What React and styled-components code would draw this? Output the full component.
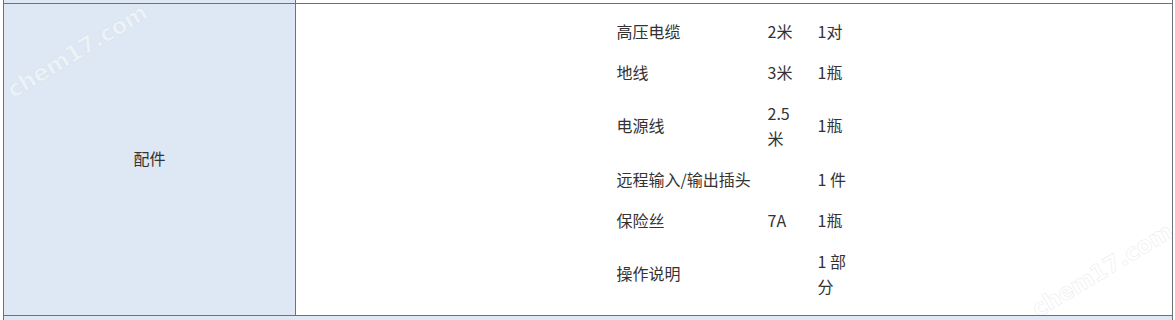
import React from "react";
import styled, { createGlobalStyle } from "styled-components";

const items = [
	{ name: "高压电缆", spec: "2米", qty: "1对" },
	{ name: "地线", spec: "3米", qty: "1瓶" },
	{ name: "电源线", spec: "2.5米", qty: "1瓶" },
	{ name: "远程输入/输出插头", spec: "", qty: "1 件" },
	{ name: "保险丝", spec: "7A", qty: "1瓶" },
	{ name: "操作说明", spec: "", qty: "1 部分" },
];

const GlobalStyle = createGlobalStyle`
	html, body {
		margin: 0;
		padding: 0;
		background: #ffffff;
		overflow: hidden;
	}
	body {
		font-family: "Noto Sans CJK SC", "Noto Sans", sans-serif;
		color: #333333;
	}
`;

const App = () => {
	return (
		<>
			<GlobalStyle />
			<Table>
				<Row $height="3px" $noTop>
					<HeadCell />
					<BodyCell />
				</Row>
				<Row>
					<HeadCell>配件</HeadCell>
					<BodyCell>
						<Parts>
							{items.map((item, i) => (
								<React.Fragment key={i}>
									<PartCell>{item.name}</PartCell>
									<PartCell>{item.spec}</PartCell>
									<PartCell>{item.qty}</PartCell>
								</React.Fragment>
							))}
						</Parts>
					</BodyCell>
					<Watermark $x="73px" $y="47px">chem17.com</Watermark>
					<Watermark $x="1098px" $y="266px">chem17.com</Watermark>
				</Row>
				<FullRow />
			</Table>
		</>
	);
};

const Table = styled.div`
	width: 1170px;
	margin-left: 3px;
	box-sizing: border-box;
	border-left: 1px solid #6e7176;
	border-right: 1px solid #6e7176;
`;

const Row = styled.div`
	position: relative;
	display: grid;
	grid-template-columns: 292px 876px;
	height: ${(p) => p.$height || "auto"};
	border-top: ${(p) => (p.$noTop ? "none" : "1px solid #6e7176")};
	overflow: hidden;
`;

const HeadCell = styled.div`
	display: flex;
	align-items: center;
	justify-content: center;
	box-sizing: border-box;
	padding-bottom: 3px;
	border-right: 1px solid #6e7176;
	background: #dde8f4;
	font-size: 16px;
	line-height: 25px;
`;

const BodyCell = styled.div`
	display: flex;
	align-items: center;
	justify-content: center;
	box-sizing: border-box;
	min-height: 311px;
	padding-bottom: 2px;
	background: #ffffff;
`;

const Parts = styled.div`
	display: grid;
	grid-template-columns: 135px 34px 34px;
	column-gap: 16px;
	align-items: center;
	font-size: 16px;
	line-height: 25px;
`;

const PartCell = styled.div`
	padding: 8px 0;
`;

const FullRow = styled.div`
	height: 10px;
	border-top: 1px solid #6e7176;
	background: #dde8f4;
`;

const Watermark = styled.div`
	position: absolute;
	left: ${(p) => p.$x};
	top: ${(p) => p.$y};
	transform: translate(-50%, -50%) rotate(-31deg);
	font-family: "DejaVu Sans", sans-serif;
	font-weight: bold;
	font-size: 23px;
	letter-spacing: -0.5px;
	white-space: nowrap;
	color: rgba(255, 255, 255, 0.45);
	-webkit-text-stroke: 0.7px rgba(200, 205, 212, 0.35);
	pointer-events: none;
`;

export default App;
